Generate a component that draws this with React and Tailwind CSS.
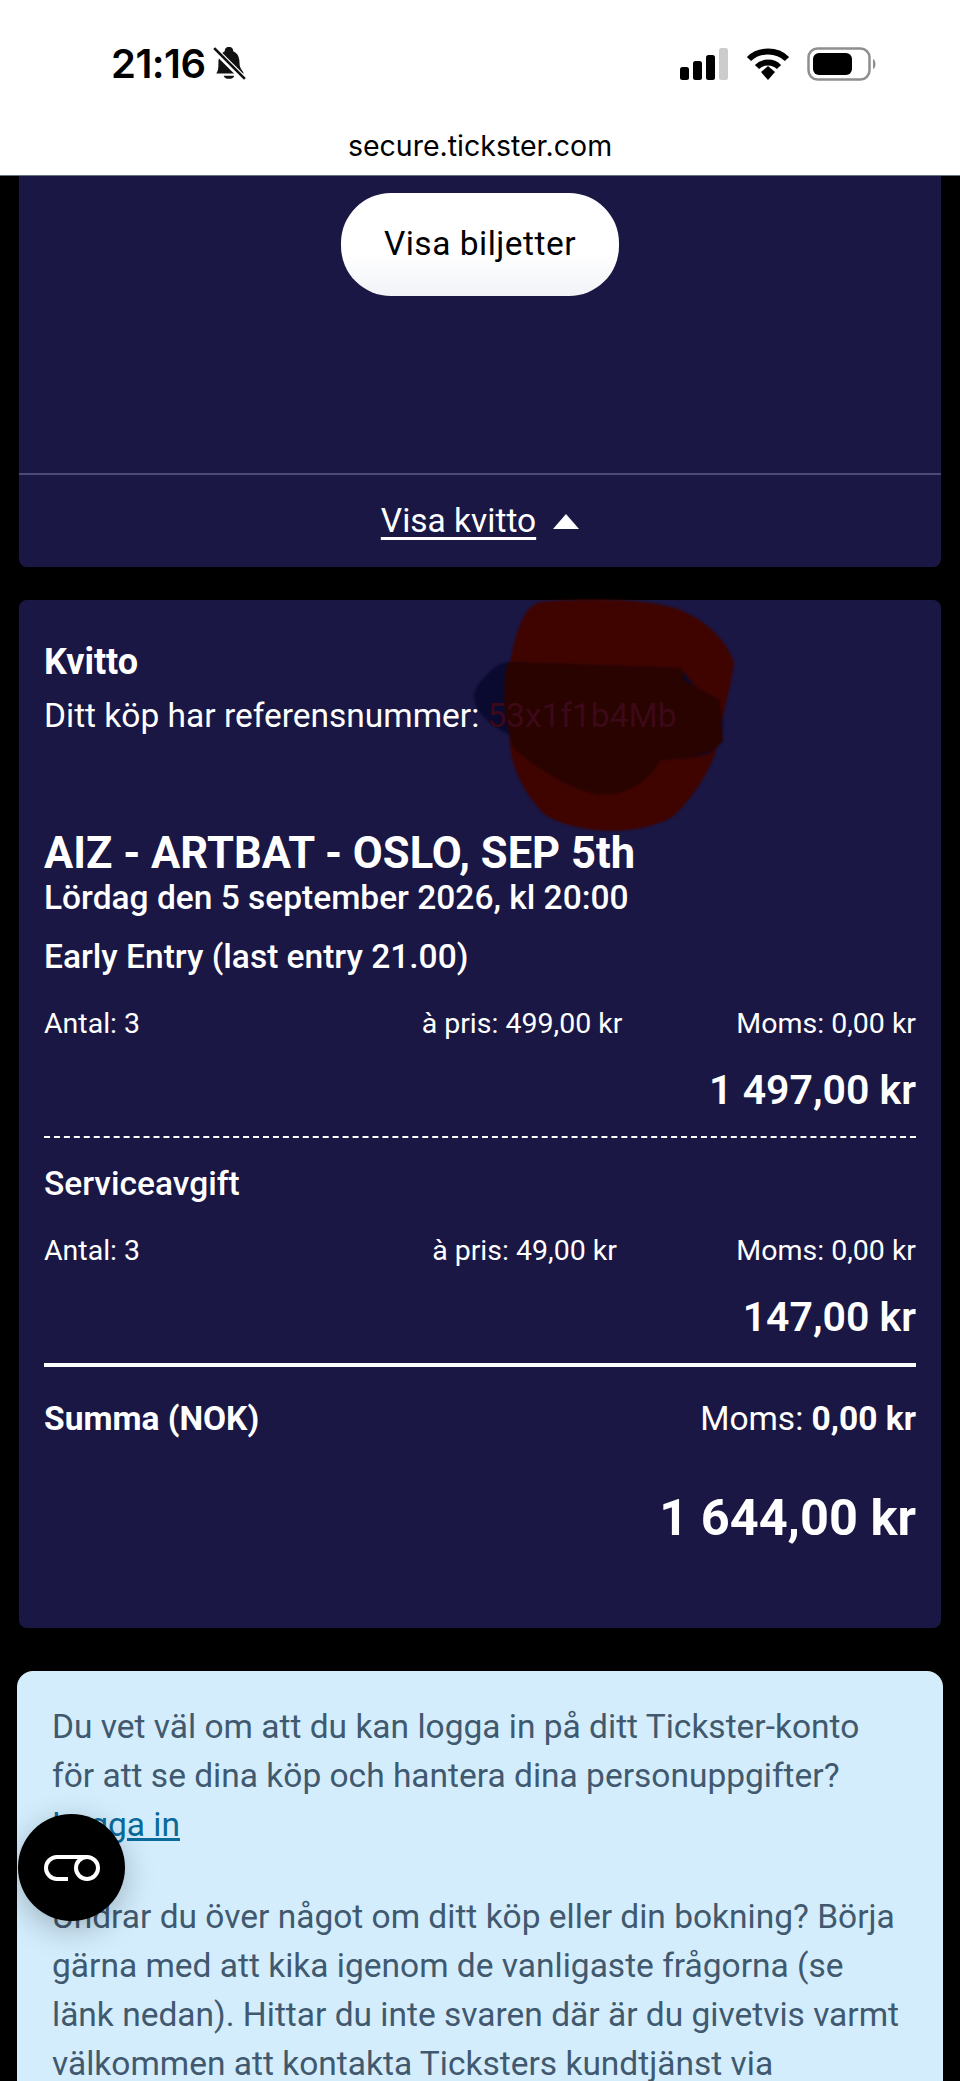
function Row({ left, mid, midClass, right }) {
  return (
    <div className="grid grid-cols-[370px_216px_1fr] items-center text-[28.5px] leading-[36px]">
      <span>{left}</span>
      <span className={"text-center whitespace-nowrap " + midClass}>{mid}</span>
      <span className="text-right">{right}</span>
    </div>
  );
}

function StatusIcons() {
  return (
    <div className="flex items-center gap-[17px]">
      <svg width="50" height="32" viewBox="0 0 50 32">
        <rect x="1" y="19" width="9" height="13" rx="2.5" fill="#000" />
        <rect x="14" y="13" width="9" height="19" rx="2.5" fill="#000" />
        <rect x="27" y="7" width="9" height="25" rx="2.5" fill="#000" />
        <rect x="40" y="0" width="9" height="32" rx="2.5" fill="#ccc" />
      </svg>
      <svg width="44" height="32" viewBox="0 0 44 32" fill="none">
        <path d="M3 11 C13 1 31 1 41 11" stroke="#000" strokeWidth="6" />
        <path d="M11 19 C17 13 27 13 33 19" stroke="#000" strokeWidth="6" />
        <path d="M15 24 L22 18 L29 24 L22 32 Z" fill="#000" />
      </svg>
      <svg width="70" height="34" viewBox="0 0 70 34" fill="none">
        <rect x="1.5" y="1.5" width="61" height="31" rx="9" stroke="#8e8e8e" strokeWidth="2.5" />
        <rect x="6" y="6" width="39" height="22" rx="6" fill="#000" />
        <path d="M66 12 C69 13 69.500 21 66 22 Z" fill="#8e8e8e" />
      </svg>
    </div>
  );
}

export default function App() {
  return (
    <div className="relative h-[2081px] w-[960px] overflow-hidden bg-black font-['Roboto',sans-serif]">
      <div className="h-[176px] border-b border-gray-500 bg-white">
        <div className="flex h-[128px] items-center justify-between pl-[111px] pr-[83px]">
          <div className="flex items-center gap-[6px] font-['Inter',sans-serif] text-[40px] font-semibold tracking-[-0.5px] text-black">
            21:16
            <svg width="34" height="36" viewBox="0 0 32 34">
              <path d="M16 1 C19 1 20 3 20 5 C25 7 26 12 26 17 C26 21 29 23 30 26 L4 26 C6 23 6 20 6 16 C6 11 8 7 12 5 C12 3 13 1 16 1 Z" fill="#111" />
              <path d="M11 28 H21 C20 32 12 32 11 28 Z" fill="#111" />
              <path d="M2 3 L31 32" stroke="#fff" strokeWidth="6" />
              <path d="M2 2 L31 31" stroke="#111" strokeWidth="2.5" />
            </svg>
          </div>
          <StatusIcons />
        </div>
        <div className="pt-[1px] text-center font-['Inter',sans-serif] text-[28.5px] leading-[34px] text-black">secure.tickster.com</div>
      </div>

      <div className="mx-[19px] rounded-b-[8px] bg-[#1a1745]">
        <div className="flex h-[299px] justify-center border-b-2 border-[#4d4a78] pt-[17px]">
          <button className="h-[103px] w-[278px] rounded-[50px] bg-gradient-to-b from-white from-60% to-[#f1f3f7] text-[33.5px] tracking-[0.5px] text-black">
            Visa biljetter
          </button>
        </div>
        <div className="flex h-[92px] items-center justify-center gap-[17px] text-[33.5px] text-white">
          <span className="underline underline-offset-[5px]">Visa kvitto</span>
          <span className="h-0 w-0 border-x-[13px] border-b-[15px] border-x-transparent border-b-white" />
        </div>
      </div>

      <div className="relative mx-[19px] mt-[33px] h-[1028px] rounded-[8px] bg-[#1a1745] px-[25px] pt-[41px] text-white">
        <h2 className="text-[36px] font-bold leading-[42px]">Kvitto</h2>
        <p className="mt-[12px] flex text-[33.5px] leading-[42px]">
          Ditt köp har referensnummer:
          <span className="relative z-10 ml-[8px] text-[#3c0918]">53x1f1b4Mb</span>
        </p>
        {/* scribble over the reference number */}
        <svg className="absolute left-[451px] top-0 overflow-visible blur-[1px]" width="280" height="240" viewBox="0 0 280 240">
          <path d="M70 2 C110 -2 170 -2 205 8 C240 20 258 45 264 62 C262 85 253 110 250 135 C245 165 225 195 205 215 C175 236 110 236 75 215 C55 195 42 170 40 145 C38 110 35 60 50 25 C55 12 60 6 70 2 Z" fill="#3f0400" />
          <path d="M12 80 C22 68 30 62 40 62 L210 68 L253 120 C254 135 250 150 235 155 C210 160 150 165 100 155 C60 145 30 135 12 115 C0 100 3 90 12 80 Z" fill="#0a0a30" />
          <path d="M38 62 L212 68 L214 80 L250 100 L253 140 C245 155 220 158 190 160 C180 180 160 195 130 195 C100 190 70 170 45 150 C35 130 30 90 38 62 Z" fill="#290300" />
        </svg>

        <h3 className="relative mt-[92px] text-[43.5px] font-bold leading-[49px]">AIZ - ARTBAT - OSLO, SEP 5th</h3>
        <p className="text-[33.5px] font-medium leading-[40px]">Lördag den 5 september 2026, kl 20:00</p>
        <p className="mt-[19px] text-[33.5px] font-medium leading-[40px]">Early Entry (last entry 21.00)</p>

        <div className="mt-[29px]">
          <Row left="Antal: 3" mid="à pris: 499,00 kr" midClass="" right="Moms: 0,00 kr" />
        </div>
        <div className="mt-[25px] text-right text-[41px] font-semibold leading-[46px]">1 497,00 kr</div>
        <div className="mt-[23px] border-t-2 border-dashed border-white" />

        <p className="mt-[26px] text-[33.5px] font-medium leading-[40px]">Serviceavgift</p>
        <div className="mt-[29px]">
          <Row left="Antal: 3" mid="à pris: 49,00 kr" midClass="pl-[5px]" right="Moms: 0,00 kr" />
        </div>
        <div className="mt-[25px] text-right text-[41px] font-semibold leading-[46px]">147,00 kr</div>
        <div className="mt-[23px] border-t-4 border-white" />

        <div className="mt-[32px] flex items-center justify-between text-[33.5px] leading-[40px]">
          <span className="font-bold">Summa (NOK)</span>
          <span>
            Moms: <span className="font-bold">0,00 kr</span>
          </span>
        </div>
        <div className="mt-[51px] text-right text-[50.5px] font-bold leading-[56px]">1 644,00 kr</div>
      </div>

      <div className="mx-[17px] mt-[43px] h-[420px] rounded-t-[16px] bg-[#d3edfd] px-[35px] pt-[31px] text-[33.5px] leading-[49px] text-[#41596e]">
        <p>
          Du vet väl om att du kan logga in på ditt Tickster-konto för att se dina köp och hantera dina personuppgifter?{" "}
          <a className="text-[#0a6a9b] underline" href="#">Logga in</a>
        </p>
        <p className="mt-[43px]">
          Undrar du över något om ditt köp eller din bokning? Börja gärna med att kika igenom de vanligaste frågorna (se länk nedan). Hittar du inte svaren där är du givetvis varmt välkommen att kontakta Ticksters kundtjänst via
        </p>
      </div>

      <button className="absolute left-[18px] top-[1814px] flex h-[107px] w-[107px] items-center justify-center rounded-full bg-black shadow-[0_8px_30px_rgba(0,0,0,0.25)]">
        <svg width="56" height="26" viewBox="0 0 56 26" fill="none" stroke="#fff" strokeWidth="4">
          <path d="M24 24 H13 A11 11 0 0 1 13 2 H43" />
          <circle cx="43" cy="13" r="11" />
        </svg>
      </button>
    </div>
  );
}
